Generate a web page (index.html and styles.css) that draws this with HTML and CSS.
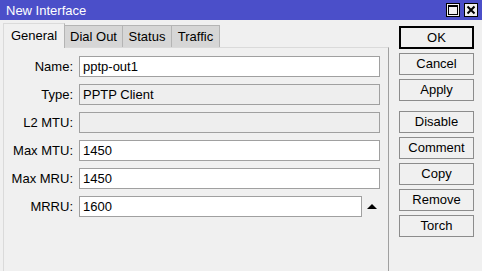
FILE: index.html
```html
<!DOCTYPE html>
<html>
<head>
  <title>New Interface</title>
  <link rel="stylesheet" href="styles.css">
</head>
<body>
  <div class="titlebar">
    <span class="title">New Interface</span>
    <div class="win-btns">
      <span class="win-btn">
        <svg width="12" height="12" viewBox="0 0 12 12"><rect x="1.5" y="1.5" width="9" height="9" fill="none" stroke="#000" stroke-width="1"/><line x1="1.5" y1="2" x2="10.5" y2="2" stroke="#000" stroke-width="2"/></svg>
      </span>
      <span class="win-btn">
        <svg width="12" height="12" viewBox="0 0 12 12"><path d="M2.5 2.5 L9.5 9.5 M9.5 2.5 L2.5 9.5" stroke="#000" stroke-width="2"/></svg>
      </span>
    </div>
  </div>

  <div class="main">
    <div class="left">
      <div class="tabs">
        <div class="tab active">General</div>
        <div class="tab">Dial Out</div>
        <div class="tab">Status</div>
        <div class="tab">Traffic</div>
      </div>
      <div class="panel">
        <div class="row">
          <label>Name:</label>
          <div class="field">pptp-out1</div>
        </div>
        <div class="row">
          <label>Type:</label>
          <div class="field readonly">PPTP Client</div>
        </div>
        <div class="row">
          <label>L2 MTU:</label>
          <div class="field readonly"></div>
        </div>
        <div class="row">
          <label>Max MTU:</label>
          <div class="field">1450</div>
        </div>
        <div class="row">
          <label>Max MRU:</label>
          <div class="field">1450</div>
        </div>
        <div class="row">
          <label>MRRU:</label>
          <div class="field short">1600</div>
          <span class="arrow"></span>
        </div>
      </div>
    </div>

    <div class="buttons">
      <button class="focused">OK</button>
      <button>Cancel</button>
      <button>Apply</button>
      <button class="spaced">Disable</button>
      <button>Comment</button>
      <button>Copy</button>
      <button>Remove</button>
      <button>Torch</button>
    </div>
  </div>
</body>
</html>
```

FILE: styles.css
```css
body {
  margin: 0;
  padding: 0;
  background-color: #f0f0f0;
  font-family: "Liberation Sans", Arial, sans-serif;
  font-size: 13px;
  color: #000;
  width: 482px;
  height: 271px;
  overflow: hidden;
}
.titlebar {
  height: 20px;
  background-color: #4b4fc9;
  display: flex;
  align-items: center;
  justify-content: space-between;
}
.title {
  color: white;
  padding-left: 6px;
}
.win-btns {
  display: flex;
  gap: 4px;
  margin-right: 4px;
}
.win-btn {
  width: 12px;
  height: 12px;
  border: 1px solid #000;
  background-color: #f0f0f0;
  display: flex;
}
.main {
  display: flex;
}
.left {
  width: 386px;
  margin-left: 3px;
  padding-top: 3px;
}
.tabs {
  display: flex;
  align-items: flex-end;
  height: 24px;
}
.tab {
  height: 22px;
  line-height: 21px;
  padding: 0;
  text-align: center;
  white-space: nowrap;
  background-color: #d6d6d6;
  border: 1px solid #b4b4b4;
  border-bottom: none;
  border-left: none;
  box-sizing: border-box;
}
.tab.active {
  background-color: #f0f0f0;
  height: 25px;
  line-height: 24px;
  width: 62px;
  border-left: 1px solid #dadada;
  border-top: 1px solid #dadada;
  border-right: 1px solid #b4b4b4;
  position: relative;
  top: 1px;
}
.tab:nth-child(2) { width: 58px; }
.tab:nth-child(3) { width: 49px; }
.tab:nth-child(4) { width: 48px; }
.panel {
  height: 224px;
  border-left: 1px solid #dadada;
  border-top: 1px solid #dadada;
  border-right: 1px solid #a0a0a0;
  padding-top: 8px;
  display: flex;
  flex-direction: column;
  gap: 7px;
}
.row {
  display: flex;
  align-items: center;
}
.row label {
  width: 69px;
  text-align: right;
  margin-right: 6px;
}
.field {
  width: 301px;
  height: 21px;
  box-sizing: border-box;
  border: 1px solid #a0a0a0;
  background-color: white;
  padding-left: 3px;
  line-height: 19px;
}
.field.readonly {
  background-color: #eeeeee;
}
.field.short {
  width: 283px;
}
.arrow {
  width: 0;
  height: 0;
  border-left: 5px solid transparent;
  border-right: 5px solid transparent;
  border-bottom: 5px solid #000;
  margin-left: 5px;
}
.buttons {
  margin-left: 10px;
  padding-top: 6px;
  display: flex;
  flex-direction: column;
  gap: 4px;
}
.buttons button {
  width: 75px;
  height: 22px;
  font-family: "Liberation Sans", Arial, sans-serif;
  font-size: 13px;
  line-height: 20px;
  color: #000;
  background-color: #f0f0f0;
  border: 1px solid #8c8c8c;
  padding: 0;
}
.buttons button.focused {
  border: 2px solid #000;
  height: 23px;
}
.buttons button.spaced {
  margin-top: 6px;
}
```
